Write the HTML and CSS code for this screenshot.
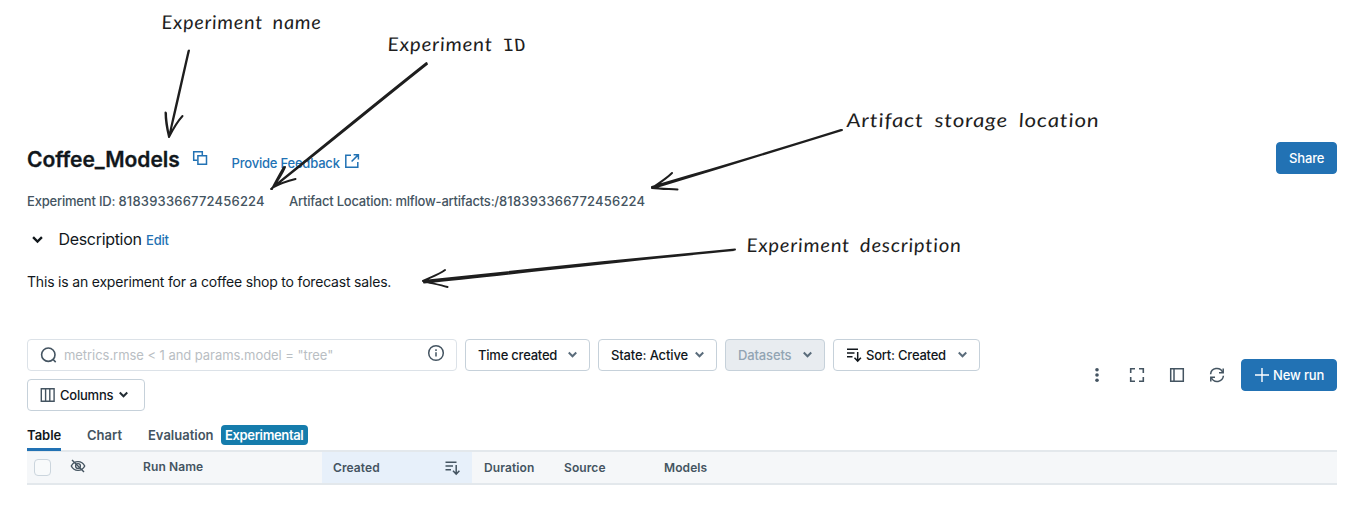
FILE: index.html
```html
<!DOCTYPE html>
<html lang="en">
<head>
<meta charset="utf-8">
<title>Coffee_Models</title>
<link rel="stylesheet" href="styles.css">
</head>
<body>
<svg class="defs" width="0" height="0" aria-hidden="true">
  <symbol id="chevron" viewBox="0 0 10 10"><path d="M1.6 3.2 5 6.6 8.4 3.2" fill="none" stroke="currentColor" stroke-width="1.8"/></symbol>
  <symbol id="sort" viewBox="0 0 16 16"><path d="M1 2.3h11M1 6h7.5M1 9.7h5.5M11.7 5v9M8.5 10.8l3.2 3.3 3.2-3.3" fill="none" stroke="currentColor" stroke-width="1.5"/></symbol>
</svg>
<main class="page">
  <header class="header">
    <h1 class="title">Coffee_Models</h1>
    <svg class="copy" width="16" height="16" viewBox="0 0 16 16" fill="none" stroke="currentColor" stroke-width="1.5"><path d="M5.3 10.3H1.7V1.7H10.3v3.3"/><path d="M5.9 5.7h8.6v8.6H5.9z"/></svg>
    <a class="feedback">Provide Feedback
      <svg width="16" height="16" viewBox="0 0 16 16" fill="none" stroke="currentColor" stroke-width="1.5"><path d="M7 2.2H1.8v12h12V9M9.6 1.7h4.8v4.8M14.2 1.9 7.6 8.5"/></svg></a>
    <button class="btn primary share">Share</button>
  </header>
  <div class="meta"><span class="meta-id">Experiment ID: <span class="digits">818393366772456224</span></span><span class="meta-loc">Artifact Location: mlflow-artifacts:/<span class="digits">818393366772456224</span></span></div>
  <div class="desc-head"><svg class="desc-chev" width="13" height="13"><use href="#chevron"/></svg><span class="desc-label">Description</span><a class="edit">Edit</a></div>
  <p class="desc">This is an experiment for a coffee shop to forecast sales.</p>
  <section class="toolbar">
    <div class="filters">
      <div class="search">
        <svg width="18" height="18" viewBox="0 0 18 18" fill="none" stroke="#445461" stroke-width="1.6"><circle cx="8.3" cy="8.7" r="6.7"/><path d="m12.9 13.3 2.8 2.8"/></svg>
        <span class="placeholder">metrics.rmse &lt; 1 and params.model = "tree"</span>
        <svg class="info" width="18" height="18" viewBox="0 0 18 18" fill="none" stroke="#445461" stroke-width="1.5"><circle cx="9" cy="9" r="7.3"/><path d="M9 8.2v4.3M9 5.3v1.6"/></svg>
      </div>
      <button class="btn w-time"><span class="tight">Time created</span><svg class="chev" width="11" height="11"><use href="#chevron"/></svg></button>
      <button class="btn w-state"><span class="snug">State: Active</span><svg class="chev" width="11" height="11"><use href="#chevron"/></svg></button>
      <button class="btn w-data disabled"><span class="snug">Datasets</span><svg class="chev" width="11" height="11"><use href="#chevron"/></svg></button>
      <button class="btn w-sort"><svg class="lead" width="16" height="16"><use href="#sort"/></svg><span class="tight">Sort: Created</span><svg class="chev" width="11" height="11"><use href="#chevron"/></svg></button>
      <button class="btn w-cols"><svg class="lead" width="16" height="16" viewBox="0 0 16 16" fill="none" stroke="#445461" stroke-width="1.4"><path d="M1.3 1.8h12.8v12.4H1.3zM5.6 1.8v12.4M9.8 1.8v12.4"/></svg><span class="tight">Columns</span><svg class="chev dark" width="11" height="11"><use href="#chevron"/></svg></button>
    </div>
    <div class="actions">
      <svg width="16" height="16" viewBox="0 0 16 16" fill="#445461"><circle cx="8" cy="2.7" r="1.8"/><circle cx="8" cy="8" r="1.8"/><circle cx="8" cy="13.3" r="1.8"/></svg>
      <svg width="16" height="16" viewBox="0 0 16 16" fill="none" stroke="#445461" stroke-width="1.6"><path d="M1.7 6V1.7H6M10 1.7h4.3V6M14.3 10v4.3H10M6 14.3H1.7V10"/></svg>
      <svg width="16" height="16" viewBox="0 0 16 16" fill="none" stroke="#445461" stroke-width="1.5"><path d="M1.7 1.7h12.6v12.6H1.7zM5 1.7v12.6"/></svg>
      <svg width="16" height="16" viewBox="0 0 16 16" fill="none" stroke="#445461" stroke-width="1.5"><path d="M1.6 7.2A6.3 6.3 0 0 1 13.6 5.2M14.4 8.8A6.3 6.3 0 0 1 2.4 10.8"/><path d="M14.2 1.6v4.2H10M1.8 14.4v-4.2H6"/></svg>
      <button class="btn primary new"><svg width="16" height="16" viewBox="0 0 16 16" fill="none" stroke="currentColor" stroke-width="1.4"><path d="M8 1v14M1 8h14"/></svg><span class="snug">New run</span></button>
    </div>
  </section>
  <nav class="tabs"><span class="tab active">Table</span><span class="tab chart">Chart</span><span class="tab eval">Evaluation</span><span class="badge">Experimental</span></nav>
  <div class="thead">
    <div class="c-check"><i class="box"></i></div>
    <div class="c-eye"><svg width="16" height="16" viewBox="0 0 16 16" fill="none" stroke="#445461" stroke-width="1.4"><path d="M1.3 8C2.6 5.3 5 3.6 8 3.6S13.4 5.3 14.7 8C13.4 10.7 11 12.4 8 12.4S2.6 10.7 1.3 8z"/><circle cx="8" cy="8" r="2.4"/><path d="M2 2l12 12"/></svg></div>
    <div class="c-name">Run Name</div>
    <div class="c-created"><span>Created</span><svg width="17" height="16"><use href="#sort"/></svg></div>
    <div class="c-dur low">Duration</div>
    <div class="c-src low">Source</div>
    <div class="c-mod low">Models</div>
  </div>
</main>
<svg class="notes" width="1362" height="510" viewBox="0 0 1362 510">
  <g class="ink">
    <path d="M189 50.5C183 76 177 105 169 137M188.500 51C182 80 175 109 169.300 136M169 137C167 129 165.500 121 165.500 112.500M169 137C173 129 177 122 182.500 116M166 113c0 9 2 17 3 24"/>
    <path d="M426.500 63C376 103 326 144 272 188M427 64C379 102 327 145 271 189M272 189C276 181 280 174 284 167M272 188c7-4 15-7 23.500-9M285 167c-3 7-7 13-12 20"/>
    <path d="M842 130C781 149 716 169 653 188M841 130C778 150 716 168 652 187M652 188c7-5 14-9 20-15M652 188c8 1 17 1 25.500 1.500"/>
    <path d="M735 249.500C632 259 524 270 423 281M734 250C637 259 529 272 424 282.500M423 281c8-4 15-6 22-11M423 281c8 2 17 4 24.500 6"/>
  </g>
  <g class="hand">
    <text transform="translate(162 28.500) skewX(5)" textLength="160" lengthAdjust="spacingAndGlyphs">Experiment name</text>
    <text transform="translate(388 50.500) skewX(5)" textLength="139" lengthAdjust="spacingAndGlyphs">Experiment <tspan class="serifed">ID</tspan></text>
    <text transform="translate(847 126.500) skewX(5)" textLength="253" lengthAdjust="spacingAndGlyphs">Artifact storage location</text>
    <text transform="translate(747 251.500) skewX(5)" textLength="215" lengthAdjust="spacingAndGlyphs">Experiment description</text>
  </g>
</svg>
</body>
</html>
```
FILE: styles.css
```css
* { box-sizing: border-box; }
body { margin: 0; background: #fff; color: #11171c; font: 500 13px/20px Inter, "Liberation Sans", sans-serif; overflow: hidden; }
svg { display: block; flex: none; }
.defs { position: absolute; }
.page { width: 1310px; margin-left: 27px; padding-top: 141px; white-space: nowrap; }
.header { display: flex; align-items: center; height: 33px; }
.title { margin: 0; width: 165px; padding-top: 5px; font-size: 21px; font-weight: 600; line-height: 28px; letter-spacing: -.05px; -webkit-text-stroke: .3px #11171c; }
.copy { color: #2272b4; margin-top: 1px; }
.feedback { display: flex; align-items: center; width: 140px; margin: 10px 0 0 23.5px; color: #2272b4; letter-spacing: -.2px; }
.feedback svg { margin: -3px 0 0 4px; }
.btn { display: flex; align-items: center; height: 32px; padding: 0 12px; border: 1px solid #c6d1da; border-radius: 4px; background: #fff; color: #11171c; font: inherit; }
.primary { background: #2272b4; border-color: #2272b4; color: #fff; }
.share { width: 61px; margin-left: auto; letter-spacing: -.15px; }
.meta { display: flex; height: 20px; margin-top: 17px; color: #445461; letter-spacing: -.2px; }
.meta-id { width: 262px; }
.meta-loc { letter-spacing: -.22px; }
.digits { letter-spacing: .2px; }
.desc-head { display: flex; align-items: center; height: 24px; margin-top: 16px; }
.desc-chev { margin: 0 15px 0 3.5px; }
.desc-label { width: 87.5px; font-size: 16px; font-weight: 400; letter-spacing: -.32px; }
.edit { color: #2272b4; padding-top: 2px; letter-spacing: -.2px; }
.desc { margin: 21px 0 0; height: 20px; font-size: 14px; font-weight: 400; letter-spacing: -.19px; }
.toolbar { display: flex; align-items: center; justify-content: space-between; margin-top: 46.5px; height: 72px; }
.filters { display: flex; flex-wrap: wrap; gap: 8px; width: 960px; }
.search { display: flex; align-items: center; width: 430px; height: 32px; padding: 0 12px; border: 1px solid #dce2e8; border-radius: 4px; color: #b9bec3; font-weight: 400; }
.placeholder { margin-left: 6px; letter-spacing: -.05px; }
.info { margin-left: auto; margin-top: -3px; margin-right: -1px; }
.chev { margin-left: auto; color: #5a6c7b; }
.dark { color: #222c34; }
.lead { margin-right: 4px; }
.tight { letter-spacing: -.22px; }
.snug { letter-spacing: -.14px; }
.w-time { width: 125px; }
.w-state { width: 119px; }
.w-data { width: 100px; }
.w-sort { width: 147px; }
.w-cols { width: 118px; }
.filters .btn { padding-right: 11px; }
.disabled { background: #e8ecf0; color: #92a4b3; }
.filters .w-cols { padding-right: 15px; }
.actions { display: flex; align-items: center; gap: 24px; }
.new { width: 96px; margin-left: -8px; gap: 3px; }
.tabs { display: flex; align-items: flex-start; height: 39.5px; padding-top: 14px; color: #445461; font-weight: 600; }
.tab { height: 26px; line-height: 20px; }
.active { width: 34px; color: #11171c; border-bottom: 3px solid #2272b4; }
.chart { margin-left: 26px; width: 61px; }
.eval { width: 73px; }
.badge { width: 87px; padding-left: 4px; height: 20px; border-radius: 4px; background: #157cac; color: #fff; letter-spacing: -.35px; }
.thead { display: flex; height: 35px; border-top: 2px solid #e3e8ec; border-bottom: 2px solid #e3e8ec; background: #f5f7f9; color: #445461; font-size: 12px; font-weight: 600; line-height: 30px; letter-spacing: .1px; }
.c-check { width: 43px; padding: 7px 0 0 7px; }
.box { display: block; width: 17px; height: 17px; border: 1px solid #cbd5dd; border-radius: 4px; background: #f8fafb; }
.c-eye { width: 73px; padding-top: 6px; }
.c-name { width: 179px; }
.c-created { display: flex; align-items: center; justify-content: space-between; width: 150px; padding: 0 11px; background: #e7f0fa; }
.low { padding-top: 1px; }
.c-dur { width: 92px; padding-left: 12px; }
.c-src { width: 100px; }
.notes { position: absolute; left: 0; top: 0; }
.ink { fill: none; stroke: #1e1e1e; stroke-width: 2; stroke-linecap: round; }
.hand { fill: #1e1e1e; font: italic 400 19px Lato, sans-serif; letter-spacing: .7px; word-spacing: 4px; font-variant-ligatures: none; }
.serifed { font-family: "DejaVu Sans Mono", monospace; font-size: 17px; font-style: normal; }
```
